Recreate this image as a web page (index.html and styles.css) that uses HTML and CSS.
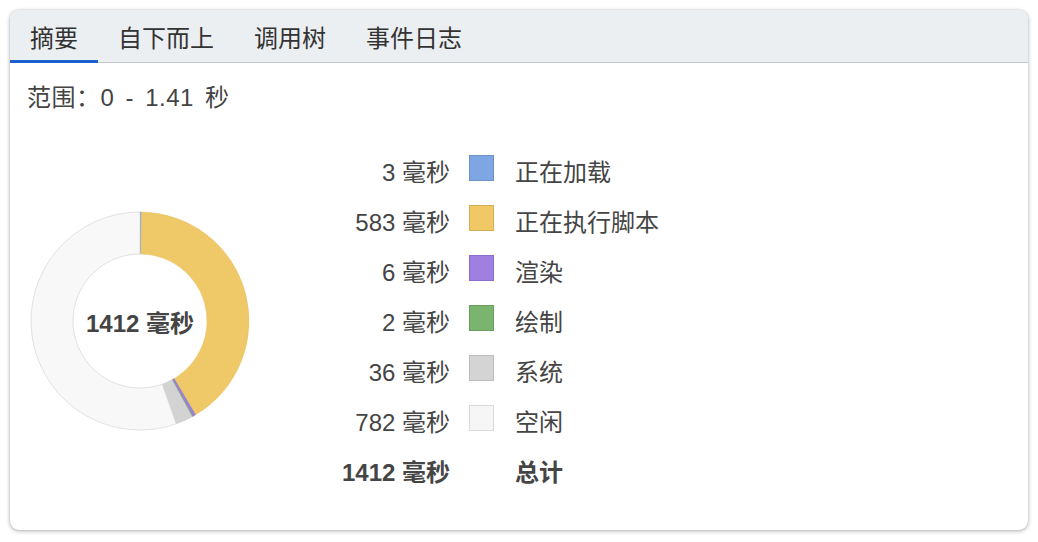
FILE: index.html
```html
<!DOCTYPE html>
<html lang="zh-CN">
<head>
<meta charset="utf-8">
<title>摘要</title>
<link rel="stylesheet" href="styles.css">
</head>
<body>
<div class="card">
  <div class="tabbar">
    <div class="tab active">摘要</div>
    <div class="tab">自下而上</div>
    <div class="tab">调用树</div>
    <div class="tab">事件日志</div>
  </div>
  <div class="content">
    <div class="range">范围：0 - 1.41 秒</div>
    <div class="summary">
      <div class="donut">
        <svg width="220" height="220" viewBox="-110 -110 220 220">
          <path class="s-load" d="M 0 -109 A 109 109 0 0 1 1.455 -108.990 L 0.895 -66.994 A 67 67 0 0 0 0 -67 Z"/>
          <path class="s-script" d="M 1.455 -108.990 A 109 109 0 0 1 55.477 93.826 L 34.101 57.673 A 67 67 0 0 0 0.895 -66.994 Z"/>
          <path class="s-render" d="M 55.477 93.826 A 109 109 0 0 1 52.952 95.274 L 32.549 58.563 A 67 67 0 0 0 34.101 57.673 Z"/>
          <path class="s-paint" d="M 52.952 95.274 A 109 109 0 0 1 52.102 95.741 L 32.026 58.850 A 67 67 0 0 0 32.549 58.563 Z"/>
          <path class="s-system" d="M 52.102 95.741 A 109 109 0 0 1 36.164 102.826 L 22.229 63.205 A 67 67 0 0 0 32.026 58.850 Z"/>
          <path class="s-idle" d="M 36.164 102.826 A 109 109 0 1 1 0 -109 L 0 -67 A 67 67 0 1 0 22.229 63.205 Z"/>
        </svg>
        <div class="donut-total">1412 毫秒</div>
      </div>
      <div class="legend">
        <div class="val">3 毫秒</div><div class="sw sw-load"></div><div class="lbl">正在加载</div>
        <div class="val">583 毫秒</div><div class="sw sw-script"></div><div class="lbl">正在执行脚本</div>
        <div class="val">6 毫秒</div><div class="sw sw-render"></div><div class="lbl">渲染</div>
        <div class="val">2 毫秒</div><div class="sw sw-paint"></div><div class="lbl">绘制</div>
        <div class="val">36 毫秒</div><div class="sw sw-system"></div><div class="lbl">系统</div>
        <div class="val">782 毫秒</div><div class="sw sw-idle"></div><div class="lbl">空闲</div>
        <div class="val total">1412 毫秒</div><div></div><div class="lbl total">总计</div>
      </div>
    </div>
  </div>
</div>
</body>
</html>
```
FILE: styles.css
```css
html, body {
  margin: 0;
  padding: 0;
  background: #ffffff;
}
body {
  padding: 10px;
  font-family: "Liberation Sans", "Noto Sans CJK SC", sans-serif;
  color: #454545;
}
.card {
  box-sizing: border-box;
  width: 1018px;
  height: 520px;
  background: #fff;
  border-radius: 9px;
  box-shadow: 0 1px 4px rgba(0, 0, 0, 0.32), 0 0 1px rgba(0, 0, 0, 0.2);
  overflow: hidden;
}
.tabbar {
  display: flex;
  background: #eceff1;
  border-bottom: 1px solid #c5c9cc;
  height: 52px;
}
.tab {
  box-sizing: border-box;
  height: 53px;
  margin-bottom: -1px;
  padding: 4px 20px 0;
  font-size: 24px;
  line-height: 49px;
  color: #333;
}
.tab.active {
  border-bottom: 3px solid #1b5fd1;
}
.content {
  padding: 20px 0 0 17px;
}
.range {
  font-size: 24px;
  line-height: 30px;
  color: #444;
  word-spacing: 4px;
  letter-spacing: 0.5px;
}
.summary {
  display: flex;
  align-items: center;
  margin-top: 32px;
  padding-left: 3px;
}
.donut {
  position: relative;
  width: 220px;
  height: 220px;
  margin-top: 2px;
}
.donut svg {
  display: block;
}
.donut-total {
  position: absolute;
  inset: 0;
  display: flex;
  align-items: center;
  justify-content: center;
  font-weight: bold;
  font-size: 24px;
  color: #444;
}
.s-load { fill: #7ea6e3; stroke: #6f94cf; stroke-width: 0.5; }
.s-script { fill: #efc868; stroke: #e0b957; stroke-width: 0.4; }
.s-render { fill: #9d7fe0; stroke: #8a6bd4; stroke-width: 0.5; }
.s-paint { fill: #7bb46f; stroke: #6aa35e; stroke-width: 0.5; }
.s-system { fill: #d3d3d3; stroke: #c4c4c4; stroke-width: 0.5; }
.s-idle { fill: #f8f8f8; stroke: #d6d6d6; stroke-width: 0.7; }
.legend {
  display: grid;
  grid-template-columns: 219px 25px auto;
  grid-auto-rows: 50px;
  align-items: center;
  font-size: 24px;
  color: #454545;
}
.val {
  text-align: right;
  padding-right: 19px;
}
.lbl {
  padding-left: 21px;
}
.total {
  font-weight: bold;
}
.sw {
  box-sizing: border-box;
  width: 25px;
  height: 26px;
  margin-bottom: 5px;
  border: 1.5px solid;
}
.sw-load { background: #7ea6e3; border-color: #6e91c8; }
.sw-script { background: #f0c866; border-color: #d4ae56; }
.sw-render { background: #9f80e1; border-color: #8a6dcc; }
.sw-paint { background: #7bb46e; border-color: #699f5d; }
.sw-system { background: #d4d4d4; border-color: #bcbcbc; }
.sw-idle { background: #f6f6f6; border-color: #d9d9d9; }
```
